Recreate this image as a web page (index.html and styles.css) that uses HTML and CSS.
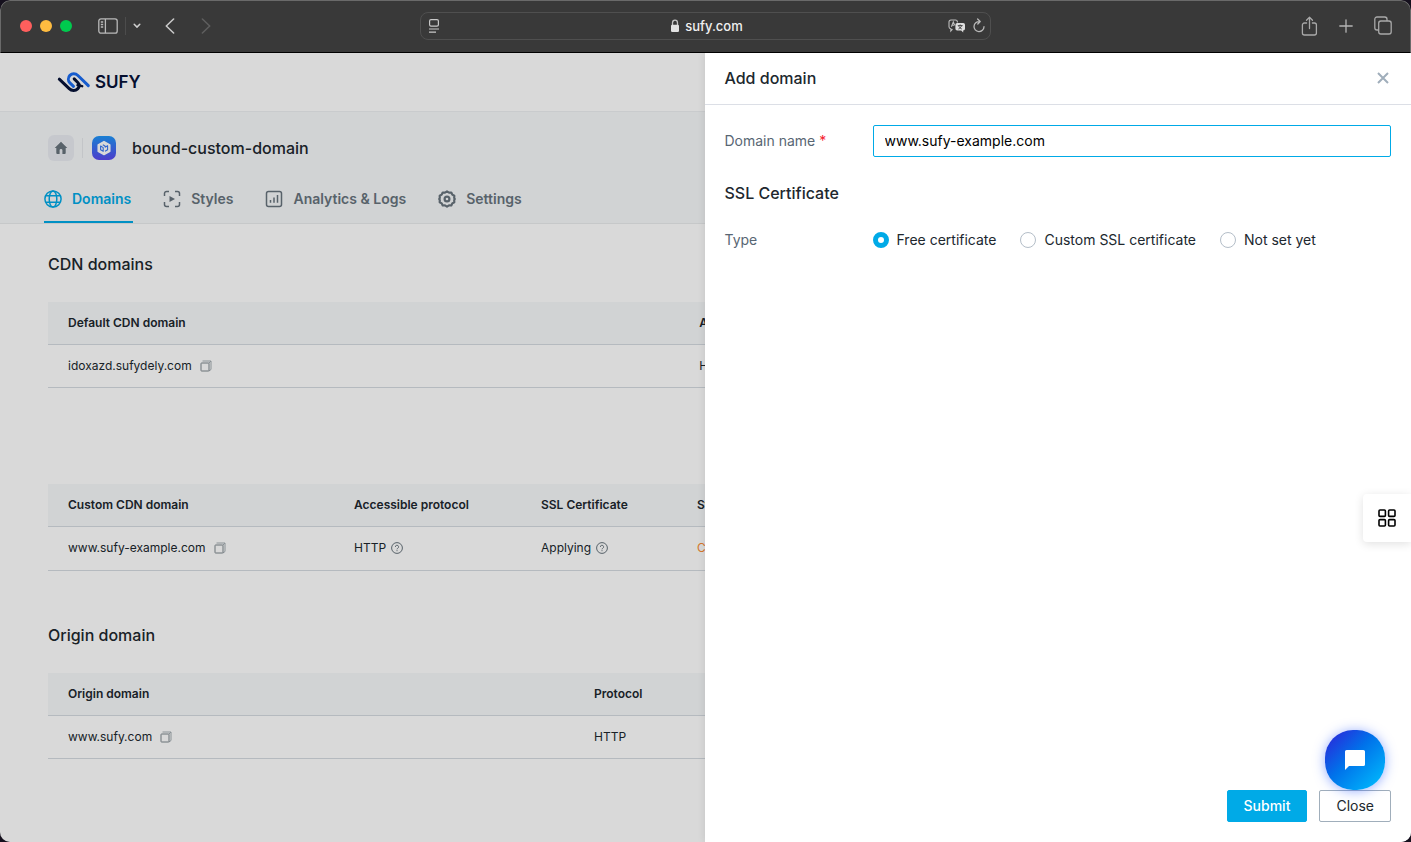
FILE: index.html
```html
<!DOCTYPE html>
<html lang="en">
<head>
<meta charset="utf-8">
<title>sufy.com</title>
<link rel="stylesheet" href="styles.css">
</head>
<body>
<div class="window">
  <header class="chrome">
    <div class="chrome-left">
      <span class="dot dot-red"></span><span class="dot dot-yellow"></span><span class="dot dot-green"></span>
      <button class="plain sidebar-btn" aria-label="Sidebar"><svg width="20" height="16" viewBox="0 0 20 16" fill="none" stroke="#b9b9b9" stroke-width="1.3"><rect x=".8" y=".8" width="18.4" height="14.4" rx="2.2"/><path d="M7.4 1v14M2.8 4h2.4M2.8 6.5h2.4M2.8 9h2.4"/></svg></button>
      <span class="chrome-rule"></span>
      <button class="plain" aria-label="Tab groups"><svg width="8" height="6" viewBox="0 0 8 6" fill="none" stroke="#d0d0d0" stroke-width="1.5" stroke-linecap="round"><path d="M1.2 1.3 4 4.1l2.8-2.8"/></svg></button>
      <button class="plain back-btn" aria-label="Back"><svg width="10" height="16" viewBox="0 0 10 16" fill="none" stroke="#c8c8c8" stroke-width="1.6" stroke-linecap="round" stroke-linejoin="round"><path d="M8.6 1 1.3 8l7.3 7"/></svg></button>
      <button class="plain forward-btn" aria-label="Forward"><svg width="10" height="16" viewBox="0 0 10 16" fill="none" stroke="#5e5e5e" stroke-width="1.6" stroke-linecap="round" stroke-linejoin="round"><path d="M1.4 1l7.3 7-7.3 7"/></svg></button>
    </div>
    <div class="address">
      <svg width="12" height="16" viewBox="0 0 12 16" fill="none" stroke="#c8c8c8" stroke-width="1.2"><rect x="1.6" y="1.6" width="8.8" height="6.6" rx="1.4"/><path d="M1 11h10M1 14.2h7"/></svg>
      <span class="address-host"><svg width="10" height="14" viewBox="0 0 10 14"><path d="M2.500 6V3.900a2.500 2.700 0 0 1 5 0V6" fill="none" stroke="#c6c6c6" stroke-width="1.3"/><rect x="1" y="5.800" width="8" height="7.200" rx="1.2" fill="#e3e3e3"/></svg>sufy.com</span>
      <span class="address-tools">
        <svg width="18" height="14" viewBox="0 0 18 14"><path d="M4.500 10.200 2.800 12V9.800A2 2 0 0 1 1 7.800V3a2 2 0 0 1 2-2h4.400a2 2 0 0 1 2 2v.6M3.400 7.800 5.300 3l1.400 3.200M4 6.300h2.300" fill="none" stroke="#bcbcbc" stroke-width="1.1"/><path d="M9.200 4h6a1.800 1.800 0 0 1 1.800 1.800v4a1.800 1.800 0 0 1-1.800 1.800V13.500l-2-1.900h-4a1.800 1.800 0 0 1-1.800-1.800v-4A1.800 1.800 0 0 1 9.200 4z" fill="#dedede"/><path d="M9.800 6.600h4.800M12.200 5.500v1.100M13.600 6.700c-.5 1.500-1.500 2.500-3.200 3.300M10.800 7.200c.6 1.300 1.600 2.200 3 2.800" fill="none" stroke="#393939" stroke-width=".9"/></svg>
        <svg width="12" height="16" viewBox="0 0 12 16" fill="none" stroke="#b9b9b9" stroke-width="1.3" stroke-linecap="round" stroke-linejoin="round"><path d="M6.500 3.600A5 5 0 1 0 11 8.700M4.600 1l2.600 2.500-2.400 2.500"/></svg>
      </span>
    </div>
    <div class="chrome-right">
      <svg width="17" height="20" viewBox="0 0 17 20" fill="none" stroke="#a9a9a9" stroke-width="1.3" stroke-linecap="round" stroke-linejoin="round"><path d="M5.600 7H3.400A2 2 0 0 0 1.400 9v8a2 2 0 0 0 2 2h10a2 2 0 0 0 2-2V9a2 2 0 0 0-2-2h-2M8.500 12.500V1.300M5.500 4.200l3-3 3 3"/></svg>
      <svg width="14" height="14" viewBox="0 0 14 14" stroke="#b4b4b4" stroke-width="1.3" stroke-linecap="round"><path d="M7 .8v12.400M.8 7h12.400"/></svg>
      <svg width="18" height="19" viewBox="0 0 18 19" fill="none" stroke="#a9a9a9" stroke-width="1.3"><rect x="4.700" y="5" width="12.500" height="13" rx="2.200"/><path d="M4.700 14H3a2.200 2.200 0 0 1-2.200-2.200V3.200A2.200 2.200 0 0 1 3 1h7.800A2.200 2.200 0 0 1 13 3.200V5"/></svg>
    </div>
  </header>

  <div class="stage">
    <div class="page">
      <div class="brandbar">
        <a class="brand" href="#"><svg width="34" height="24" viewBox="0 0 34 24" fill="none" stroke-width="3" stroke-linecap="round" stroke-linejoin="round"><path d="M2.300 9.200 12.200 18.600c2.500 2.600 6.200 2.600 8.400.3 1.900-2 1.900-4.600.2-6.400l-3.600-3.600" stroke="#071238"/><path d="M20.500 15.200l4.700 1" stroke="#071238" stroke-width="2.400"/><path d="M16.500 16.300l-3.600-3.400c-2-2-2-5.400 0-7.500 2.200-2.300 5.500-2.300 8 .1L31.300 15.600" stroke="#1c6df2"/></svg><span>SUFY</span></a>
      </div>
      <div class="subhead">
        <div class="crumb">
          <a class="home" href="#" aria-label="Home"><svg width="14" height="14" viewBox="0 0 14 14"><path d="M7 .7.7 7h1.600v5a1 1 0 0 0 1 1h2.300V9.300a1.400 1.400 0 0 1 2.800 0V13h2.300a1 1 0 0 0 1-1V7h1.600z" fill="#68747d"/></svg></a>
          <span class="crumb-rule"></span>
          <svg width="24" height="24" viewBox="0 0 24 24"><defs><linearGradient id="tile" x1="0" y1="0" x2="0" y2="1"><stop offset="0" stop-color="#1e96f8"/><stop offset="1" stop-color="#5a48ef"/></linearGradient></defs><rect width="24" height="24" rx="7" fill="url(#tile)"/><path d="M12 5.600l5.800 3.200v6.500L12 18.600l-5.800-3.300V8.800z" fill="#fff" stroke="#fff" stroke-width="1.5" stroke-linejoin="round"/><path d="M8.600 10v3.800l2.600 1.500v-3.700zM13 11.200l2.600-1.500v4L13 15.200M10.800 8.700l2.200 1.200v1.300" fill="none" stroke="#3b78f3" stroke-width="1.1" stroke-linejoin="round"/></svg>
          <h1>bound-custom-domain</h1>
        </div>
        <nav class="tabs">
          <a class="tab tab-active" href="#"><svg width="18" height="18" viewBox="0 0 18 18" fill="none" stroke="currentColor" stroke-width="1.5"><circle cx="9" cy="9" r="8.100"/><ellipse cx="9" cy="9" rx="3.800" ry="8.100"/><path d="M1.800 5.700h14.400M1.800 12.300h14.400"/></svg>Domains</a>
          <a class="tab" href="#"><svg width="18" height="18" viewBox="0 0 18 18" fill="none" stroke="currentColor" stroke-width="1.5"><path d="M1.500 6V3.500a2 2 0 0 1 2-2H6M12 1.500h2.500a2 2 0 0 1 2 2V6M16.500 12v2.500a2 2 0 0 1-2 2H12M6 16.500H3.500a2 2 0 0 1-2-2V12"/><path d="M6.500 6v6l5.500-3z" fill="currentColor" stroke="none"/></svg>Styles</a>
          <a class="tab" href="#"><svg width="18" height="18" viewBox="0 0 18 18" fill="none" stroke="currentColor" stroke-width="1.5"><rect x="1.500" y="1.500" width="15" height="15" rx="2"/><path d="M5.500 12.800V10M9 12.800V7.500M12.500 12.800V5"/></svg>Analytics &amp; Logs</a>
          <a class="tab" href="#"><svg width="18" height="18" viewBox="0 0 18 18" fill="none" stroke="currentColor" stroke-width="2.200" stroke-linejoin="round"><path d="M9 1.400l2 1.200 2.300-.1 1 2.100 2 1.200-.1 2.200.6 1-.6 1 .1 2.200-2 1.200-1 2.100-2.300-.1-2 1.200-2-1.200-2.300.1-1-2.100-2-1.200.1-2.200-.6-1 .6-1-.1-2.200 2-1.200 1-2.100 2.300.1z"/><circle cx="9" cy="9" r="2.400"/></svg>Settings</a>
        </nav>
      </div>
      <main class="content">
        <h2>CDN domains</h2>
        <table class="grid grid-default">
          <colgroup><col class="c48"><col></colgroup>
          <thead><tr><th>Default CDN domain</th><th>Accessible protocol</th></tr></thead>
          <tbody><tr><td><span class="cell">idoxazd.sufydely.com <button class="plain copy" aria-label="Copy"><svg width="12" height="12" viewBox="0 0 12 12" fill="none"><path d="M2.500 1h8.500v8.500L9 11M9 3l2-2" stroke="#a4acb2"/><rect x="1" y="3" width="8" height="8" rx=".5" stroke="#7c858c"/></svg></button></span></td><td>HTTP</td></tr></tbody>
        </table>
        <table class="grid grid-custom">
          <colgroup><col class="c22"><col class="c14"><col class="c12"><col></colgroup>
          <thead><tr><th>Custom CDN domain</th><th>Accessible protocol</th><th>SSL Certificate</th><th>Status</th></tr></thead>
          <tbody><tr><td><span class="cell">www.sufy-example.com <button class="plain copy" aria-label="Copy"><svg width="12" height="12" viewBox="0 0 12 12" fill="none"><path d="M2.500 1h8.500v8.500L9 11M9 3l2-2" stroke="#a4acb2"/><rect x="1" y="3" width="8" height="8" rx=".5" stroke="#7c858c"/></svg></button></span></td>
          <td><span class="cell cell-help">HTTP <svg width="12" height="12" viewBox="0 0 12 12" fill="none" stroke="#68747d"><circle cx="6" cy="6" r="5.400"/><path d="M4.400 4.900a1.600 1.600 0 1 1 2.300 1.400c-.5.300-.7.500-.7 1M6 8.200v1"/></svg></span></td>
          <td><span class="cell cell-help">Applying <svg width="12" height="12" viewBox="0 0 12 12" fill="none" stroke="#68747d"><circle cx="6" cy="6" r="5.400"/><path d="M4.400 4.900a1.600 1.600 0 1 1 2.300 1.400c-.5.300-.7.500-.7 1M6 8.200v1"/></svg></span></td>
          <td class="pending">Configuring</td></tr></tbody>
        </table>
        <h2>Origin domain</h2>
        <table class="grid grid-origin">
          <colgroup><col class="c40"><col></colgroup>
          <thead><tr><th>Origin domain</th><th>Protocol</th></tr></thead>
          <tbody><tr><td><span class="cell">www.sufy.com <button class="plain copy" aria-label="Copy"><svg width="12" height="12" viewBox="0 0 12 12" fill="none"><path d="M2.500 1h8.500v8.500L9 11M9 3l2-2" stroke="#a4acb2"/><rect x="1" y="3" width="8" height="8" rx=".5" stroke="#7c858c"/></svg></button></span></td><td>HTTP</td></tr></tbody>
        </table>
      </main>
    </div>
    <div class="scrim"></div>

    <form class="drawer">
      <div class="drawer-head">
        <h2>Add domain</h2>
        <button type="button" class="plain" aria-label="Dismiss"><svg width="12" height="12" viewBox="0 0 12 12" stroke="#a0aebb" stroke-width="2"><path d="M1 1l10 10M11 1 1 11"/></svg></button>
      </div>
      <div class="drawer-body">
        <div class="field">
          <label for="domain">Domain name <span class="required">*</span></label>
          <input id="domain" class="text-input" type="text" value="www.sufy-example.com">
        </div>
        <h2>SSL Certificate</h2>
        <div class="field field-type">
          <span class="field-name" id="type-label">Type</span>
          <div class="radios" role="radiogroup" aria-labelledby="type-label">
            <label class="radio" for="free"><input id="free" type="radio" name="cert" checked>Free certificate</label>
            <label class="radio" for="custom"><input id="custom" type="radio" name="cert">Custom SSL certificate</label>
            <label class="radio" for="none"><input id="none" type="radio" name="cert">Not set yet</label>
          </div>
        </div>
      </div>
      <div class="drawer-foot">
        <button type="button" class="btn btn-primary">Submit</button>
        <button type="button" class="btn">Close</button>
      </div>
    </form>

    <button class="plain apps" aria-label="Apps"><svg width="18" height="18" viewBox="0 0 18 18" fill="none" stroke="#000" stroke-width="1.6"><rect x="1" y="1" width="6.400" height="6.400" rx="1"/><rect x="10.600" y="1" width="6.400" height="6.400" rx="1"/><rect x="1" y="10.600" width="6.400" height="6.400" rx="1"/><rect x="10.600" y="10.600" width="6.400" height="6.400" rx="1"/></svg></button>
    <button class="plain chat" aria-label="Chat"><svg width="20" height="20" viewBox="0 0 20 20"><path d="M1.600 0h16.800A1.600 1.600 0 0 1 20 1.600v12.800a1.600 1.600 0 0 1-1.600 1.600H4l-4 4V1.600A1.600 1.600 0 0 1 1.600 0z" fill="#fff"/></svg></button>
  </div>
</div>
</body>
</html>
```

FILE: styles.css
```css
* { box-sizing: border-box; }
body {
  margin: 0;
  background: #15101d;
  font-family: Inter, "Liberation Sans", sans-serif;
  font-size: 14px;
  line-height: 20px;
  color: #20272e;
}
svg { display: block; flex: none; }
a { color: inherit; text-decoration: none; }
h1, h2 { margin: 0; font-size: 16px; line-height: 24px; font-weight: 500; }
.plain { border: 0; padding: 0; background: none; display: flex; align-items: center; justify-content: center; }

.window {
  display: flex;
  flex-direction: column;
  height: 100vh;
  overflow: hidden;
  border-radius: 10px;
}

/* Browser toolbar */
.chrome {
  display: grid;
  grid-template-columns: 1fr minmax(200px, 571px) 1fr;
  align-items: center;
  height: 53px;
  flex: none;
  padding-bottom: 2px;
  background: #393939;
  border: 1px solid #6a6a6a;
  border-bottom: 1px solid #000;
  border-radius: 10px 10px 0 0;
}
.chrome-left { display: flex; align-items: center; padding-left: 19px; }
.dot { width: 12px; height: 12px; border-radius: 50%; margin-right: 8px; }
.dot-red { background: #ff5f5d; }
.dot-yellow { background: #ffbc40; }
.dot-green { background: #00ca4e; }
.sidebar-btn { margin-left: 18px; }
.chrome-rule { width: 1px; height: 18px; margin: 0 7px; background: #4c4c4c; }
.back-btn { margin-left: 24px; }
.forward-btn { margin-left: 26px; }
.address {
  display: grid;
  grid-template-columns: 1fr auto 1fr;
  align-items: center;
  height: 28px;
  padding: 0 5px 0 7px;
  border: 1px solid #4f4f4f;
  border-radius: 8px;
}
.address-host {
  display: flex;
  align-items: center;
  gap: 5px;
  color: #f0f0f0;
  font-size: 13px;
  font-weight: 500;
}
.address-tools { display: flex; align-items: center; justify-content: flex-end; gap: 7px; }
.chrome-right { display: flex; align-items: center; justify-content: flex-end; gap: 21px; padding-right: 18px; }

/* Console page */
.stage { position: relative; flex: 1; overflow: hidden; background: #fff; }
.brandbar {
  display: flex;
  align-items: center;
  height: 59px;
  padding-left: 57px;
  border-bottom: 1px solid #edeff1;
}
.brand { display: flex; align-items: center; gap: 4px; font-size: 17px; font-weight: 600; color: #071238; }
.subhead { padding: 23px 44px 0; background: #f6f8fa; border-bottom: 1px solid #e9ebed; }
.crumb { display: flex; align-items: center; padding-left: 4px; }
.crumb h1 { margin-left: 16px; }
.home {
  display: flex;
  align-items: center;
  justify-content: center;
  width: 26px;
  height: 26px;
  border-radius: 6px;
  background: #e9ecf1;
}
.crumb-rule { width: 1px; height: 20px; margin: 0 9px 0 8px; background: #e5e8ec; }
.tabs { display: flex; gap: 30px; margin-top: 14px; }
.tab {
  display: flex;
  align-items: center;
  gap: 10px;
  height: 48px;
  padding: 2px 2px 0 0;
  color: #68747d;
  font-weight: 600;
  border-bottom: 2px solid transparent;
}
.tab-active { color: #00aae7; border-bottom-color: #00aae7; }
.content { padding: 28px 48px 0; }

.grid {
  width: 100%;
  table-layout: fixed;
  border-collapse: separate;
  border-spacing: 0;
  font-size: 12px;
}
.grid th, .grid td { height: 43px; padding: 0 20px; text-align: left; border-bottom: 1px solid #d5dbe1; }
.grid th { background: #f6f8fa; font-weight: 600; }
.grid-default { margin: 26px 0 96px; }
.grid-custom { margin-bottom: 52px; }
.grid-custom td { height: 44px; padding-bottom: 2px; }
.grid-origin { margin-top: 26px; }
.c48 { width: 48%; }
.c40 { width: 40%; }
.c22 { width: 286px; }
.c14 { width: 187px; }
.c12 { width: 156px; }
.cell { display: flex; align-items: center; gap: 8px; }
.cell-help { gap: 5px; }
.pending { color: #fa8c35; }

.scrim { position: absolute; inset: 0; background: rgba(0, 0, 0, .15); }

/* Drawer */
.drawer {
  position: absolute;
  top: 0;
  right: 0;
  bottom: 0;
  width: calc(50% + 1px);
  display: flex;
  flex-direction: column;
  background: #fff;
  box-shadow: 0 0 8px rgba(0, 0, 0, .1);
}
.drawer-head {
  display: flex;
  align-items: center;
  justify-content: space-between;
  height: 52px;
  padding: 0 22px 2px 20px;
  border-bottom: 1px solid #dcdfe6;
}
.drawer-body { flex: 1; padding: 20px; }
.field { display: grid; grid-template-columns: 148px 1fr; align-items: center; color: #586673; }
.field + h2 { margin-top: 24px; }
.field-type { margin-top: 25px; }
.required { color: #f5222d; }
.text-input {
  width: 100%;
  height: 32px;
  padding: 0 11px 2px;
  border: 1px solid #00aae7;
  border-radius: 2px;
  font: inherit;
  color: #000;
  outline: none;
}
.radios { display: flex; gap: 24px; color: #20272e; }
.radio { display: flex; align-items: center; gap: 8px; white-space: nowrap; }
.radio input {
  appearance: none;
  width: 16px;
  height: 16px;
  margin: 0;
  border: 1px solid #b4bec8;
  border-radius: 50%;
  background: #fff;
}
.radio input:checked { border: 5px solid #00aae7; }
.drawer-foot { display: flex; justify-content: flex-end; gap: 12px; padding: 20px; }
.btn {
  height: 32px;
  padding: 0 16px;
  border: 1px solid #a0aebb;
  border-radius: 2px;
  background: #fff;
  color: #20272e;
  font: inherit;
}
.btn-primary { background: #00aae7; border-color: #00aae7; color: #fff; font-weight: 500; }

/* Floating widgets */
.apps {
  position: absolute;
  right: 0;
  top: 441px;
  width: 48px;
  height: 48px;
  background: #fff;
  border-radius: 4px 0 0 4px;
  box-shadow: 0 2px 10px rgba(0, 0, 0, .12);
}
.chat {
  position: absolute;
  right: 26px;
  bottom: 52px;
  width: 60px;
  height: 60px;
  border-radius: 28px;
  background: linear-gradient(135deg, #2a27da 5%, #0072ea 45%, #00c3ff);
  box-shadow: 0 1px 12px rgba(40, 90, 255, .5);
}
```
